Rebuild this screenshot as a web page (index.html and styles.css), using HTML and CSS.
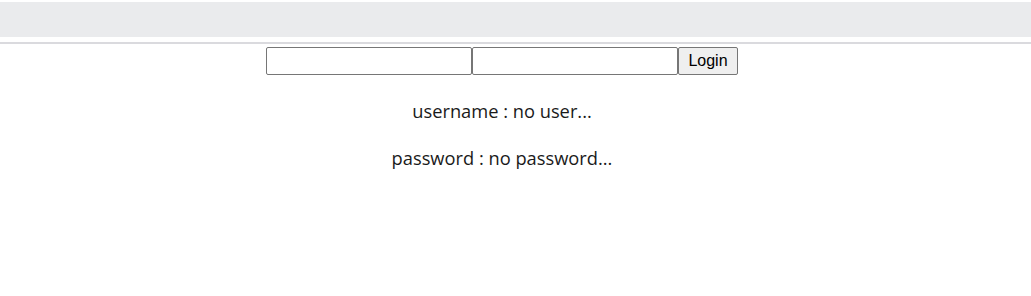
FILE: index.html
```html
<!DOCTYPE html>
<html>
<head>
<meta charset="utf-8">
<link rel="stylesheet" href="styles.css">
</head>
<body>
<div class="topbar"></div>
<div class="divider"></div>
<main class="content">
  <div class="login-row">
    <input class="field" type="text">
    <input class="field" type="password">
    <button class="login-btn">Login</button>
  </div>
  <p class="info">username : no user...</p>
  <p class="info">password : no password...</p>
</main>
</body>
</html>
```
FILE: styles.css
```css
html, body {
  margin: 0;
  padding: 0;
  background: #fff;
}
body {
  font-family: "Open Sans", "Noto Sans", sans-serif;
}
.topbar {
  margin-top: 2px;
  height: 35px;
  background: #eaebed;
}
.divider {
  margin-top: 5px;
  height: 2px;
  background: #dadade;
}
.content {
  padding-right: 27px;
}
.login-row {
  display: flex;
  justify-content: center;
  margin-top: 3px;
}
.field {
  box-sizing: border-box;
  width: 206px;
  height: 28px;
  margin: 0;
  border: 1px solid #767676;
  border-radius: 2px;
  padding: 1px 2px;
  font-size: 16px;
  background: #fff;
}
.login-btn {
  box-sizing: border-box;
  width: 60px;
  height: 28px;
  margin: 0;
  border: 1px solid #767676;
  border-radius: 2px;
  background: #efefef;
  font-family: "Liberation Sans", Arial, sans-serif;
  font-size: 16px;
  color: #000;
  padding: 0;
}
.info {
  text-align: center;
  font-size: 18.3px;
  color: #1a1a1a;
  margin: 23px 0 0;
  line-height: 25px;
}
.info + .info {
  margin-top: 22px;
}
```
